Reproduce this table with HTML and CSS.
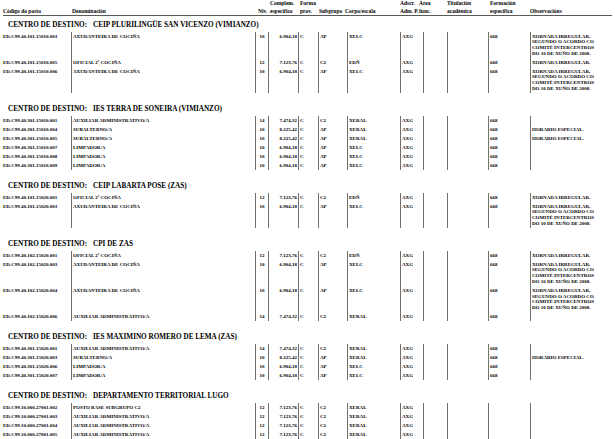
FILE: index.html
```html
<!DOCTYPE html>
<html lang="gl">
<head>
<meta charset="utf-8">
<title>Relación de postos</title>
<link rel="stylesheet" href="styles.css">
</head>
<body>
<div class="report">
  <div class="cols head">
    <div class="h-code">Código do posto</div>
    <div class="h-den">Denominación</div>
    <div class="h-niv">Niv.</div>
    <div class="h-comp"><span>Complem.</span><span>específico</span></div>
    <div class="h-forma"><span>Forma</span><span>prov.</span></div>
    <div class="h-sub">Subgrupo</div>
    <div class="h-corpo">Corpo/escala</div>
    <div class="h-adscr"><span>Adscr.</span><span>Adm. P.</span></div>
    <div class="h-area"><span>Área</span><span>func.</span></div>
    <div class="h-tit"><span>Titulación</span><span>académica</span></div>
    <div class="h-form"><span>Formación</span><span>específica</span></div>
    <div class="h-obs">Observacións</div>
  </div>

  <section class="centro first">
    <h2 class="centro-title"><span class="centro-label">CENTRO DE DESTINO:</span><span>CEIP PLURILINGÜE SAN VICENZO (VIMIANZO)</span></h2>
    <div class="cols row"><span>ED.C99.40.101.15010.003</span><span>AXUDANTEIRA DE COCIÑA</span><span class="niv">10</span><span class="comp">6.904,18</span><span>C</span><span>AP</span><span>XELC</span><span>AXG</span><span></span><span></span><span>668</span><span>XORNADA IRREGULAR,<br>SEGUNDO O ACORDO CO<br>COMITÉ INTERCENTROS<br>DO 10 DE XUÑO DE 2008.</span></div>
    <div class="cols row"><span>ED.C99.40.101.15010.005</span><span>OFICIAL 2ª COCIÑA</span><span class="niv">12</span><span class="comp">7.123,76</span><span>C</span><span>C2</span><span>EDÑ</span><span>AXG</span><span></span><span></span><span>668</span><span>XORNADA IRREGULAR.</span></div>
    <div class="cols row"><span>ED.C99.40.101.15010.006</span><span>AXUDANTEIRA DE COCIÑA</span><span class="niv">10</span><span class="comp">6.904,18</span><span>C</span><span>AP</span><span>XELC</span><span>AXG</span><span></span><span></span><span>668</span><span>XORNADA IRREGULAR,<br>SEGUNDO O ACORDO CO<br>COMITÉ INTERCENTROS<br>DO 10 DE XUÑO DE 2008.</span></div>
  </section>

  <section class="centro">
    <h2 class="centro-title"><span class="centro-label">CENTRO DE DESTINO:</span><span>IES TERRA DE SONEIRA (VIMIANZO)</span></h2>
    <div class="cols row"><span>ED.C99.40.301.15010.001</span><span>AUXILIAR ADMINISTRATIVO/A</span><span class="niv">14</span><span class="comp">7.474,32</span><span>C</span><span>C2</span><span>XERAL</span><span>AXG</span><span></span><span></span><span>668</span><span></span></div>
    <div class="cols row"><span>ED.C99.40.301.15010.004</span><span>SUBALTERNO/A</span><span class="niv">10</span><span class="comp">8.225,42</span><span>C</span><span>AP</span><span>XERAL</span><span>AXG</span><span></span><span></span><span>668</span><span>HORARIO ESPECIAL.</span></div>
    <div class="cols row"><span>ED.C99.40.301.15010.005</span><span>SUBALTERNO/A</span><span class="niv">10</span><span class="comp">8.225,42</span><span>C</span><span>AP</span><span>XERAL</span><span>AXG</span><span></span><span></span><span>668</span><span>HORARIO ESPECIAL.</span></div>
    <div class="cols row"><span>ED.C99.40.301.15010.007</span><span>LIMPADOR/A</span><span class="niv">10</span><span class="comp">6.904,18</span><span>C</span><span>AP</span><span>XELC</span><span>AXG</span><span></span><span></span><span>668</span><span></span></div>
    <div class="cols row"><span>ED.C99.40.301.15010.008</span><span>LIMPADOR/A</span><span class="niv">10</span><span class="comp">6.904,18</span><span>C</span><span>AP</span><span>XELC</span><span>AXG</span><span></span><span></span><span>668</span><span></span></div>
    <div class="cols row"><span>ED.C99.40.301.15010.009</span><span>LIMPADOR/A</span><span class="niv">10</span><span class="comp">6.904,18</span><span>C</span><span>AP</span><span>XELC</span><span>AXG</span><span></span><span></span><span>668</span><span></span></div>
  </section>

  <section class="centro">
    <h2 class="centro-title"><span class="centro-label">CENTRO DE DESTINO:</span><span>CEIP LABARTA POSE (ZAS)</span></h2>
    <div class="cols row"><span>ED.C99.40.101.15020.001</span><span>OFICIAL 2ª COCIÑA</span><span class="niv">12</span><span class="comp">7.123,76</span><span>C</span><span>C2</span><span>EDÑ</span><span>AXG</span><span></span><span></span><span>668</span><span>XORNADA IRREGULAR.</span></div>
    <div class="cols row"><span>ED.C99.40.101.15020.003</span><span>AXUDANTEIRA DE COCIÑA</span><span class="niv">10</span><span class="comp">6.904,18</span><span>C</span><span>AP</span><span>XELC</span><span>AXG</span><span></span><span></span><span>668</span><span>XORNADA IRREGULAR,<br>SEGUNDO O ACORDO CO<br>COMITÉ INTERCENTROS<br>DO 10 DE XUÑO DE 2008.</span></div>
  </section>

  <section class="centro">
    <h2 class="centro-title"><span class="centro-label">CENTRO DE DESTINO:</span><span>CPI DE ZAS</span></h2>
    <div class="cols row"><span>ED.C99.40.102.15020.001</span><span>OFICIAL 2ª COCIÑA</span><span class="niv">12</span><span class="comp">7.123,76</span><span>C</span><span>C2</span><span>EDÑ</span><span>AXG</span><span></span><span></span><span>668</span><span>XORNADA IRREGULAR.</span></div>
    <div class="cols row"><span>ED.C99.40.102.15020.003</span><span>AXUDANTEIRA DE COCIÑA</span><span class="niv">10</span><span class="comp">6.904,18</span><span>C</span><span>AP</span><span>XELC</span><span>AXG</span><span></span><span></span><span>668</span><span>XORNADA IRREGULAR,<br>SEGUNDO O ACORDO CO<br>COMITÉ INTERCENTROS<br>DO 10 DE XUÑO DE 2008.</span></div>
    <div class="cols row"><span>ED.C99.40.102.15020.004</span><span>AXUDANTEIRA DE COCIÑA</span><span class="niv">10</span><span class="comp">6.904,18</span><span>C</span><span>AP</span><span>XELC</span><span>AXG</span><span></span><span></span><span>668</span><span>XORNADA IRREGULAR,<br>SEGUNDO O ACORDO CO<br>COMITÉ INTERCENTROS<br>DO 10 DE XUÑO DE 2008.</span></div>
    <div class="cols row"><span>ED.C99.40.102.15020.006</span><span>AUXILIAR ADMINISTRATIVO/A</span><span class="niv">14</span><span class="comp">7.474,32</span><span>C</span><span>C2</span><span>XERAL</span><span>AXG</span><span></span><span></span><span>668</span><span></span></div>
  </section>

  <section class="centro">
    <h2 class="centro-title"><span class="centro-label">CENTRO DE DESTINO:</span><span>IES MAXIMINO ROMERO DE LEMA (ZAS)</span></h2>
    <div class="cols row"><span>ED.C99.40.301.15020.001</span><span>AUXILIAR ADMINISTRATIVO/A</span><span class="niv">14</span><span class="comp">7.474,32</span><span>C</span><span>C2</span><span>XERAL</span><span>AXG</span><span></span><span></span><span>668</span><span></span></div>
    <div class="cols row"><span>ED.C99.40.301.15020.003</span><span>SUBALTERNO/A</span><span class="niv">10</span><span class="comp">8.225,42</span><span>C</span><span>AP</span><span>XERAL</span><span>AXG</span><span></span><span></span><span>668</span><span>HORARIO ESPECIAL.</span></div>
    <div class="cols row"><span>ED.C99.40.301.15020.006</span><span>LIMPADOR/A</span><span class="niv">10</span><span class="comp">6.904,18</span><span>C</span><span>AP</span><span>XELC</span><span>AXG</span><span></span><span></span><span>668</span><span></span></div>
    <div class="cols row"><span>ED.C99.40.301.15020.007</span><span>LIMPADOR/A</span><span class="niv">10</span><span class="comp">6.904,18</span><span>C</span><span>AP</span><span>XELC</span><span>AXG</span><span></span><span></span><span>668</span><span></span></div>
  </section>

  <section class="centro">
    <h2 class="centro-title"><span class="centro-label">CENTRO DE DESTINO:</span><span>DEPARTAMENTO TERRITORIAL LUGO</span></h2>
    <div class="cols row"><span>ED.C99.10.000.27001.002</span><span>POSTO BASE SUBGRUPO C2</span><span class="niv">12</span><span class="comp">7.123,76</span><span>C</span><span>C2</span><span>XERAL</span><span>AXG</span><span></span><span></span><span></span><span></span></div>
    <div class="cols row"><span>ED.C99.10.000.27001.003</span><span>AUXILIAR ADMINISTRATIVO/A</span><span class="niv">12</span><span class="comp">7.123,76</span><span>C</span><span>C2</span><span>XERAL</span><span>AXG</span><span></span><span></span><span></span><span></span></div>
    <div class="cols row"><span>ED.C99.10.000.27001.004</span><span>AUXILIAR ADMINISTRATIVO/A</span><span class="niv">12</span><span class="comp">7.123,76</span><span>C</span><span>C2</span><span>XERAL</span><span>AXG</span><span></span><span></span><span></span><span></span></div>
    <div class="cols row"><span>ED.C99.10.000.27001.005</span><span>AUXILIAR ADMINISTRATIVO/A</span><span class="niv">12</span><span class="comp">7.123,76</span><span>C</span><span>C2</span><span>XERAL</span><span>AXG</span><span></span><span></span><span></span><span></span></div>
  </section>
</div>
</body>
</html>
```

FILE: styles.css
```css
html, body {
  margin: 0;
  padding: 0;
  background: #ffffff;
}

body {
  font-family: "Liberation Serif", "Times New Roman", serif;
  font-weight: bold;
  color: #000000;
  overflow: hidden;
}

.report {
  padding: 0 3px;
}

.cols {
  display: grid;
  grid-template-columns: 68px 184px 13px 30px 20px 29px 53px 23px 24px 41px 42px 1fr;
}

/* Header */
.head {
  height: 15px;
  border-bottom: 1px solid #5a5a5a;
  font-size: 5.5px;
  line-height: 7.5px;
}

.head > div {
  display: flex;
  flex-direction: column;
  justify-content: flex-end;
  white-space: nowrap;
}

.h-den { padding-left: 1px; }
.h-niv { padding-left: 3px; }
.h-comp { padding-left: 2px; }
.h-forma { padding-left: 2px; }
.h-sub { padding-left: 1px; }
.h-corpo { margin-left: -2px; }
.h-area { margin-left: -4px; }
.h-form { padding-left: 2px; }

/* Sections */
.centro {
  margin-top: 11px;
}

.centro.first {
  margin-top: 4px;
}

.centro-title {
  margin: 0 0 2px;
  padding-left: 5px;
  font-size: 7.2px;
  line-height: 10px;
  font-weight: bold;
  white-space: nowrap;
}

.centro-label {
  display: inline-block;
  width: 85px;
}

/* Rows */
.row > span {
  border-left: 1px solid #707070;
  padding: 1.6px 0 1.7px 1px;
  font-size: 5px;
  line-height: 5.7px;
  white-space: nowrap;
}

.row > span:first-child {
  border-left: none;
  padding-left: 0;
}

.row > span.niv {
  text-align: center;
  padding-left: 0;
}

.row > span.comp {
  text-align: right;
  padding-right: 1px;
}
```
